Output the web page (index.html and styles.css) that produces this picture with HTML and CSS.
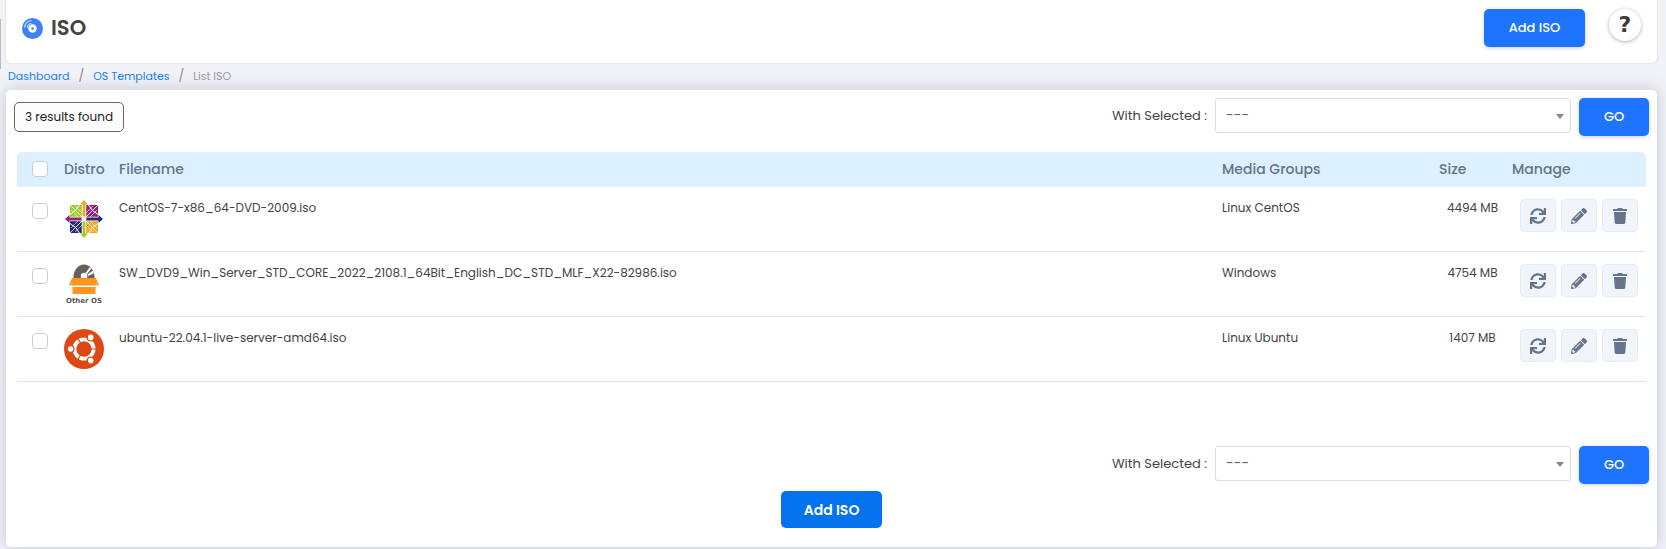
FILE: index.html
```html
<!DOCTYPE html>
<html lang="en">
<head>
<meta charset="utf-8">
<meta name="viewport" content="width=device-width, initial-scale=1">
<title>ISO</title>
<link rel="stylesheet" href="styles.css">
</head>
<body>
<svg class="sprite" aria-hidden="true">
  <symbol id="sync" viewBox="0 0 512 512"><path d="M440.65 12.57l4 82.77A247.16 247.16 0 0 0 255.83 8C134.73 8 33.91 94.92 12.29 209.82A12 12 0 0 0 24.09 224h49.05a12 12 0 0 0 11.67-9.26 175.91 175.91 0 0 1 317-56.94l-101.46-4.86a12 12 0 0 0-12.57 12v47.41a12 12 0 0 0 12 12H500a12 12 0 0 0 12-12V12a12 12 0 0 0-12-12h-47.37a12 12 0 0 0-11.98 12.57zM255.83 432a175.61 175.61 0 0 1-146-77.8l101.8 4.87a12 12 0 0 0 12.57-12v-47.4a12 12 0 0 0-12-12H12a12 12 0 0 0-12 12V500a12 12 0 0 0 12 12h47.35a12 12 0 0 0 12-12.6l-4.15-82.57A247.17 247.17 0 0 0 255.83 504c121.11 0 221.93-86.92 243.55-201.82a12 12 0 0 0-11.8-14.18h-49.05a12 12 0 0 0-11.67 9.26A175.86 175.86 0 0 1 255.83 432z"/></symbol>
  <symbol id="pencil" viewBox="0 0 512 512"><path d="M497.9 142.1l-46.1 46.1c-4.7 4.7-12.3 4.7-17 0l-111-111c-4.7-4.7-4.7-12.3 0-17l46.1-46.1c18.7-18.7 49.1-18.7 67.9 0l60.1 60.1c18.8 18.7 18.8 49.1 0 67.9zM284.2 99.8L21.6 362.4.4 483.9c-2.9 16.4 11.4 30.6 27.8 27.8l121.5-21.3 262.6-262.6c4.7-4.7 4.7-12.3 0-17l-111-111c-4.8-4.7-12.4-4.7-17.1 0zM124.1 339.9c-5.5-5.5-5.5-14.3 0-19.8l154-154c5.5-5.5 14.3-5.5 19.8 0s5.5 14.3 0 19.8l-154 154c-5.5 5.5-14.3 5.5-19.8 0zM88 424h48v36.3l-64.5 11.3-31.1-31.1L51.7 376H88v48z"/></symbol>
  <symbol id="trash" viewBox="-32 0 512 512"><path d="M432 32H312l-9.4-18.7A24 24 0 0 0 281.1 0H166.8a23.72 23.72 0 0 0-21.4 13.3L136 32H16A16 16 0 0 0 0 48v32a16 16 0 0 0 16 16h416a16 16 0 0 0 16-16V48a16 16 0 0 0-16-16zM53.2 467a48 48 0 0 0 47.9 45h245.8a48 48 0 0 0 47.9-45L416 128H32z"/></symbol>
</svg>

<div class="edge"></div>

<header class="panel page-header">
  <h1 class="page-title">
    <svg class="disc" viewBox="0 0 20 20" aria-hidden="true">
      <circle cx="10" cy="10" r="10" fill="#3b82f6"/>
      <circle cx="10" cy="10" r="4" fill="#fff"/>
      <circle cx="10" cy="10" r="1.3" fill="#3b82f6"/>
      <path d="M2.4 9.2A7.7 7.7 0 0 1 9 2.4M4.9 9.3A5.2 5.2 0 0 1 8.8 4.9" fill="none" stroke="#d5e4fe" stroke-width="1"/>
    </svg>
    ISO
  </h1>
  <div class="header-actions">
    <button class="btn" type="button">Add ISO</button>
    <button class="help" type="button" aria-label="Help">?</button>
  </div>
</header>

<nav class="crumbs" aria-label="Breadcrumb">
  <a href="#">Dashboard</a><span class="slash">/</span><a href="#">OS Templates</a><span class="slash">/</span><span class="current">List ISO</span>
</nav>

<main class="panel content">
  <div class="toolbar">
    <span class="results">3 results found</span>
    <div class="bulk">
      <label for="bulk-top">With Selected :</label>
      <span class="picker"><select id="bulk-top"><option>---</option></select></span>
      <button class="btn btn-go" type="button">GO</button>
    </div>
  </div>

  <table class="isos">
    <colgroup><col class="c-check"><col class="c-distro"><col><col class="c-media"><col class="c-size"><col class="c-manage"></colgroup>
    <thead>
      <tr>
        <th><input type="checkbox" aria-label="Select all"></th>
        <th>Distro</th><th>Filename</th><th>Media Groups</th><th>Size</th><th>Manage</th>
      </tr>
    </thead>
    <tbody>
      <tr>
        <td><input type="checkbox" aria-label="Select CentOS"></td>
        <td>
          <svg class="logo" viewBox="0 0 40 40" aria-hidden="true">
            <path d="M6 6h14v14H6z" fill="#9ccd2a"/><path d="M20 6h14v14H20z" fill="#932279"/>
            <path d="M6 20h14v14H6z" fill="#262577"/><path d="M20 20h14v14H20z" fill="#efa724"/>
            <g fill="none" stroke="#fff" stroke-width="1">
              <path d="M6 6l28 28M34 6L6 34" stroke-width=".8"/>
              <path d="M20 20L11.500 11.500L15.500 6M20 20L28.500 11.500L24.500 6M20 20L11.500 28.500L15.500 34M20 20L28.500 28.500L24.500 34"/>
              <path d="M6 15.500L11.500 11.500M34 15.500L28.500 11.500M6 24.500L11.500 28.500M34 24.500L28.500 28.500"/>
              <path d="M11 7L18 14M7 11L14 18M29 7L22 14M33 11L26 18M11 33L18 26M7 29L14 22M29 33L22 26M33 29L26 22" stroke-width=".6"/>
            </g>
            <path d="M20 6v28M6 20h28" stroke="#fff" stroke-width="4.500"/>
            <path d="M20 1l4 4.500h-2.600V18h-2.800V5.500H16z" fill="#efa724"/>
            <path d="M39 20l-4.500 4v-2.600H22v-2.800h12.500V16z" fill="#262577"/>
            <path d="M20 39l-4-4.500h2.600V22h2.800v12.500H24z" fill="#9ccd2a"/>
            <path d="M1 20l4.500-4v2.600H18v2.800H5.500V24z" fill="#932279"/>
            <circle cx="20" cy="20" r="2.500" fill="#fff"/>
          </svg>
        </td>
        <td>CentOS-7-x86_64-DVD-2009.iso</td>
        <td>Linux CentOS</td>
        <td class="size">4494 MB</td>
        <td><div class="actions">
          <button type="button" aria-label="Sync"><svg><use href="#sync"/></svg></button>
          <button type="button" aria-label="Edit"><svg><use href="#pencil"/></svg></button>
          <button type="button" aria-label="Delete"><svg><use href="#trash"/></svg></button>
        </div></td>
      </tr>
      <tr>
        <td><input type="checkbox" aria-label="Select Windows Server"></td>
        <td>
          <svg class="logo" viewBox="0 0 40 40" aria-label="Other OS">
            <path d="M9.500 13a10.500 12.500 0 0 1 21 0v1h-21z" fill="#675f58"/>
            <path d="M21.500 9l4.500-6 1.500 1.300L23 10z" fill="#fff"/>
            <path d="M23.500 10.500l5.500-4 1 2.700L24 12z" fill="#fff"/>
            <path d="M16.800 14v-2a3.200 3.200 0 0 1 6.400 0v2z" fill="#fff"/>
            <path d="M8 14h24l3 7.200-1.500.6L32 19l.5 2.500h-25L8 19l-1.500 2.800-1.500-.6z" fill="#ff941f"/>
            <path d="M8.500 23h23v6q0 1-1 1h-21q-1 0-1-1z" fill="#ff941f"/>
            <text class="logo-text" x="20" y="39" text-anchor="middle">Other OS</text>
          </svg>
        </td>
        <td>SW_DVD9_Win_Server_STD_CORE_2022_2108.1_64Bit_English_DC_STD_MLF_X22-82986.iso</td>
        <td>Windows</td>
        <td class="size">4754 MB</td>
        <td><div class="actions">
          <button type="button" aria-label="Sync"><svg><use href="#sync"/></svg></button>
          <button type="button" aria-label="Edit"><svg><use href="#pencil"/></svg></button>
          <button type="button" aria-label="Delete"><svg><use href="#trash"/></svg></button>
        </div></td>
      </tr>
      <tr>
        <td><input type="checkbox" aria-label="Select Ubuntu"></td>
        <td>
          <svg class="logo" viewBox="0 0 40 40" aria-hidden="true">
            <circle cx="20" cy="20" r="20" fill="#dd4814"/>
            <circle cx="20" cy="20" r="9.500" fill="none" stroke="#fff" stroke-width="4"/>
            <path d="M20 20H34M20 20L13 7.900M20 20L13 32.100" stroke="#dd4814" stroke-width="1.200"/>
            <circle cx="20" cy="20" r="7.500" fill="#dd4814"/>
            <g fill="#fff" stroke="#dd4814" stroke-width="1.200">
              <circle cx="6.600" cy="20" r="3.400"/><circle cx="26.700" cy="8.400" r="3.400"/><circle cx="26.700" cy="31.600" r="3.400"/>
            </g>
          </svg>
        </td>
        <td>ubuntu-22.04.1-live-server-amd64.iso</td>
        <td>Linux Ubuntu</td>
        <td class="size">1407 MB</td>
        <td><div class="actions">
          <button type="button" aria-label="Sync"><svg><use href="#sync"/></svg></button>
          <button type="button" aria-label="Edit"><svg><use href="#pencil"/></svg></button>
          <button type="button" aria-label="Delete"><svg><use href="#trash"/></svg></button>
        </div></td>
      </tr>
    </tbody>
  </table>

  <div class="toolbar toolbar-bottom">
    <div class="bulk">
      <label for="bulk-bottom">With Selected :</label>
      <span class="picker"><select id="bulk-bottom"><option>---</option></select></span>
      <button class="btn btn-go" type="button">GO</button>
    </div>
  </div>
  <div class="footer-action"><button class="btn btn-flat" type="button">Add ISO</button></div>
</main>
</body>
</html>
```
FILE: styles.css
```css
* { box-sizing: border-box; }

body {
  margin: 0;
  padding: 0 9px 2px 6px;
  background: #f1f2f8;
  color: #444;
  font: 13px/20px Poppins, Inter, sans-serif;
}

button, select { font: inherit; }
button { cursor: pointer; }

.sprite { position: absolute; width: 0; height: 0; }

.edge {
  position: absolute;
  left: 0;
  top: 19px;
  width: 1px;
  height: 50px;
  background: #bbb;
}

.panel {
  background: #fff;
  border-radius: 5px;
}

.page-header {
  display: flex;
  justify-content: space-between;
  align-items: flex-start;
  height: 63px;
  padding: 9px 16px 0;
  border-top-left-radius: 0;
  border-top-right-radius: 0;
  box-shadow: 0 0 2px #c8cad4;
}

.page-title {
  display: flex;
  align-items: center;
  gap: 8px;
  margin: 4px 0 0;
  font-size: 21px;
  line-height: 30px;
  font-weight: 600;
}
.disc { width: 21px; height: 21px; }

.header-actions { display: flex; gap: 24px; }

.btn {
  min-width: 101px;
  height: 38px;
  padding: 0 16px;
  border: 0;
  border-radius: 5px;
  background: #1e74ff;
  color: #fff;
  font-weight: 500;
  box-shadow: 0 1px 4px rgba(0, 0, 0, .2);
}
.btn-go { min-width: 70px; }
.btn-flat {
  height: 37px;
  background: #0573ee;
  font-size: 14px;
  font-weight: 600;
  box-shadow: none;
}

.help {
  width: 32px;
  height: 32px;
  padding: 0;
  border: 0;
  border-radius: 50%;
  background: #fff;
  color: #3c3c3c;
  font: 700 22px/32px "DejaVu Sans", sans-serif;
  box-shadow: 0 1px 4px rgba(0, 0, 0, .3);
}

.crumbs {
  display: flex;
  align-items: center;
  height: 27px;
  padding: 0 0 2px 2px;
  font-size: 11px;
}
.slash { padding: 0 9px; color: #888; font-size: 12px; }
.crumbs a { color: #1a7df0; text-decoration: none; }
.current { color: #999; }

.content {
  padding: 8px 8px 19px;
  box-shadow: 0 0 15px rgba(60, 64, 90, .25);
}

.toolbar {
  display: flex;
  justify-content: space-between;
  align-items: flex-start;
}
.toolbar-bottom { justify-content: flex-end; margin-top: 64px; }

.results {
  margin-top: 4px;
  padding: 4px 10px;
  border: 1px solid #666;
  border-radius: 5px;
  background: #fcfcfc;
  color: #222;
  font-size: 12px;
}

.bulk { display: flex; gap: 8px; }
.bulk label { padding-top: 8px; }

.picker { position: relative; width: 356px; height: 35px; }
.picker::after {
  content: "";
  position: absolute;
  right: 7px;
  top: 16px;
  border: 4px solid transparent;
  border-top: 5px solid #888;
  border-bottom: 0;
  pointer-events: none;
}
.picker select {
  appearance: none;
  width: 100%;
  height: 100%;
  padding: 0 24px 2px 10px;
  border: 1px solid #ddd;
  border-radius: 3px;
  background: #fff;
  color: #666;
  font-size: 14px;
}

.isos {
  width: calc(100% - 6px);
  margin: 16px 3px 0;
  border-collapse: separate;
  border-spacing: 0;
  table-layout: fixed;
}
.c-check { width: 43px; }
.c-distro { width: 55px; }
.c-media { width: 217px; }
.c-size { width: 73px; }
.c-manage { width: 138px; }

.isos th {
  height: 35px;
  padding: 0 4px 1px;
  background: #dcf0ff;
  color: #64748b;
  font-size: 14px;
  font-weight: 500;
  text-align: left;
  white-space: nowrap;
}
.isos th:first-child { border-top-left-radius: 5px; }
.isos th:last-child { border-top-right-radius: 5px; }
.isos td {
  height: 65px;
  padding: 11px 4px 0;
  border-bottom: 1px solid #d3e9f9;
  font-size: 12px;
  vertical-align: top;
}
.isos .size { padding-left: 6px; text-align: center; }
.isos th:first-child, .isos td:first-child { padding-left: 15px; }

input[type="checkbox"] {
  appearance: none;
  display: block;
  width: 16px;
  height: 16px;
  margin: 0;
  border: 1px solid #ccc;
  border-radius: 4px;
  background: #fff;
}
td input[type="checkbox"] { margin-top: 5px; }

.logo { display: block; width: 40px; height: 40px; margin-top: 1px; overflow: visible; }
.logo-text { font: 700 7px "DejaVu Sans", sans-serif; fill: #555; }

.actions { display: flex; gap: 5px; margin: 1px 0 0 8px; }
.actions button {
  display: flex;
  align-items: center;
  justify-content: center;
  width: 36px;
  height: 33px;
  padding: 0;
  border: 1px solid #deecfd;
  border-radius: 4px;
  background: #f1f4f9;
}
.actions svg { width: 16px; height: 16px; fill: #64748b; }

.footer-action { display: flex; justify-content: center; margin-top: 7px; }
```
